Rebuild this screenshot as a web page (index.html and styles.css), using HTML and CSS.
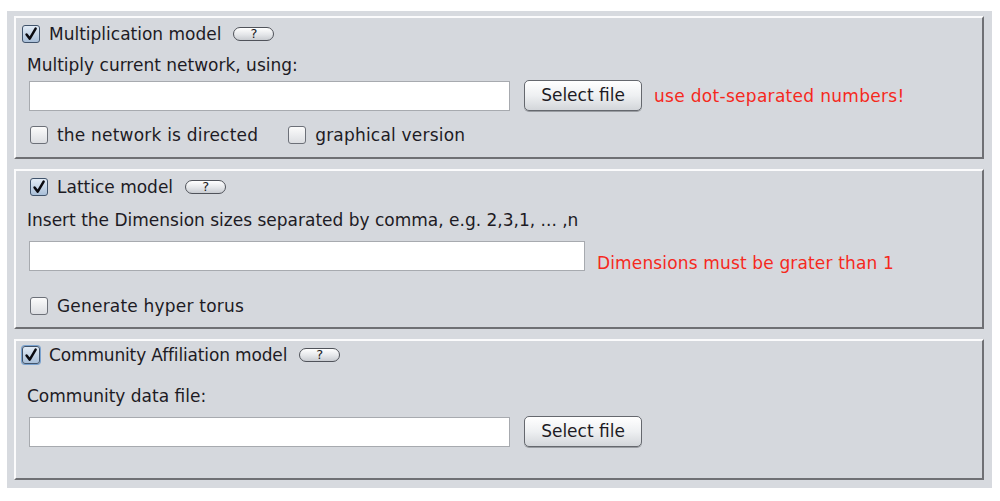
FILE: index.html
```html
<!DOCTYPE html>
<html>
<head>
<meta charset="utf-8">
<link rel="stylesheet" href="styles.css">
</head>
<body>
<div class="frame">
  <section class="panel panel-mult">
    <div class="title-row">
      <span class="cb checked"><svg viewBox="0 0 18 18"><path d="M4 9.5 L7.6 14.2 L14.2 3" /></svg></span>
      <span class="title">Multiplication model</span>
      <span class="help">?</span>
    </div>
    <div class="label">Multiply current network, using:</div>
    <div class="input-row">
      <div class="field w481"></div>
      <div class="btn">Select file</div>
      <span class="warn">use dot-separated numbers!</span>
    </div>
    <div class="opt-row">
      <span class="cb"></span><span class="opt">the network is directed</span>
      <span class="cb gap"></span><span class="opt">graphical version</span>
    </div>
  </section>

  <section class="panel panel-lat">
    <div class="title-row indent">
      <span class="cb checked"><svg viewBox="0 0 18 18"><path d="M4 9.5 L7.6 14.2 L14.2 3" /></svg></span>
      <span class="title">Lattice model</span>
      <span class="help">?</span>
    </div>
    <div class="label">Insert the Dimension sizes separated by comma, e.g. 2,3,1, ... ,n</div>
    <div class="input-row">
      <div class="field w556"></div>
      <span class="warn low">Dimensions must be grater than 1</span>
    </div>
    <div class="opt-row">
      <span class="cb"></span><span class="opt">Generate hyper torus</span>
    </div>
  </section>

  <section class="panel panel-comm">
    <div class="title-row">
      <span class="cb checked focus"><svg viewBox="0 0 18 18"><path d="M4 9.5 L7.6 14.2 L14.2 3" /></svg></span>
      <span class="title tight">Community Affiliation model</span>
      <span class="help">?</span>
    </div>
    <div class="label">Community data file:</div>
    <div class="input-row">
      <div class="field w481"></div>
      <div class="btn">Select file</div>
    </div>
  </section>
</div>
</body>
</html>
```

FILE: styles.css
```css
* { box-sizing: border-box; }
html, body { margin: 0; padding: 0; background: #fff; }
body {
  font-family: "DejaVu Sans", sans-serif;
  font-size: 17px;
  color: #1d1b24;
}
.frame {
  margin: 11px 0 0 7px;
  width: 985px;
  height: 477px;
  background: #d7dadf;
  padding: 5px 0 0 7px;
  display: flex;
  flex-direction: column;
  gap: 10px;
}
.panel {
  width: 970px;
  border-top: 2px solid #fbfbfc;
  border-left: 2px solid #fbfbfc;
  border-right: 2px solid #6f7074;
  border-bottom: 2px solid #6f7074;
  background: #d5d8dd;
  padding: 7px 6px 0;
  display: flex;
  flex-direction: column;
}
.panel-mult { height: 143px; }
.panel-lat { height: 160px; }
.panel-comm { height: 141px; padding-top: 5px; }

.title-row {
  display: flex;
  align-items: center;
  height: 18px;
}
.title-row.indent { margin-left: 8px; }
.title { margin-left: 9px; line-height: 18px; }
.title.tight { letter-spacing: -0.15px; }
.help {
  margin-left: 12px;
  width: 41px;
  height: 14px;
  border: 1px solid #50535a;
  border-radius: 7px;
  background: linear-gradient(#ffffff, #e4e6e9 55%, #c9ccd1);
  font-size: 13px;
  line-height: 12px;
  text-align: center;
  color: #1a1a22;
}

.cb {
  width: 18px;
  height: 18px;
  border: 1px solid #6c7078;
  border-radius: 3px;
  background: linear-gradient(#fbfbfb, #dcdee2);
  flex: none;
  display: inline-flex;
}
.cb.checked {
  border-color: #40536b;
  background: linear-gradient(#e3ecf6, #a9bfd8);
}
.cb.focus { box-shadow: 0 0 0 1px #7aa2cf; }
.cb svg { width: 16px; height: 16px; }
.cb svg path {
  fill: none;
  stroke: #0a0a10;
  stroke-width: 2.8;
  stroke-linecap: round;
  stroke-linejoin: round;
}

.label {
  margin-left: 5px;
  line-height: 20px;
}
.panel-mult .label { margin-top: 12px; }
.panel-lat .label { margin-top: 14px; }
.panel-comm .label { margin-top: 22px; }

.input-row {
  display: flex;
  align-items: center;
  margin-left: 7px;
  height: 31px;
}
.panel-mult .input-row { margin-top: 5px; }
.panel-lat .input-row { margin-top: 10px; }
.panel-comm .input-row { margin-top: 10px; }

.field {
  height: 30px;
  background: #fff;
  border: 1px solid #a7aaaf;
  flex: none;
}
.w481 { width: 481px; }
.w556 { width: 556px; }

.btn {
  margin-left: 14px;
  width: 118px;
  height: 31px;
  border: 1px solid #65686e;
  border-radius: 5px;
  background: linear-gradient(#ffffff, #eef0f2 50%, #d3d6da);
  box-shadow: 0 1px 0 #9a9da2;
  text-align: center;
  line-height: 29px;
}
.warn {
  color: #f5291d;
  margin-left: 12px;
  letter-spacing: 0.3px;
}
.warn.low { margin-top: 14px; letter-spacing: 0.15px; }

.opt-row {
  display: flex;
  align-items: center;
  margin-left: 8px;
  height: 18px;
}
.panel-mult .opt-row { margin-top: 15px; }
.panel-lat .opt-row { margin-top: 26px; }
.opt { margin-left: 9px; line-height: 18px; letter-spacing: 0.2px; }
.cb.gap { margin-left: 30px; }
```
